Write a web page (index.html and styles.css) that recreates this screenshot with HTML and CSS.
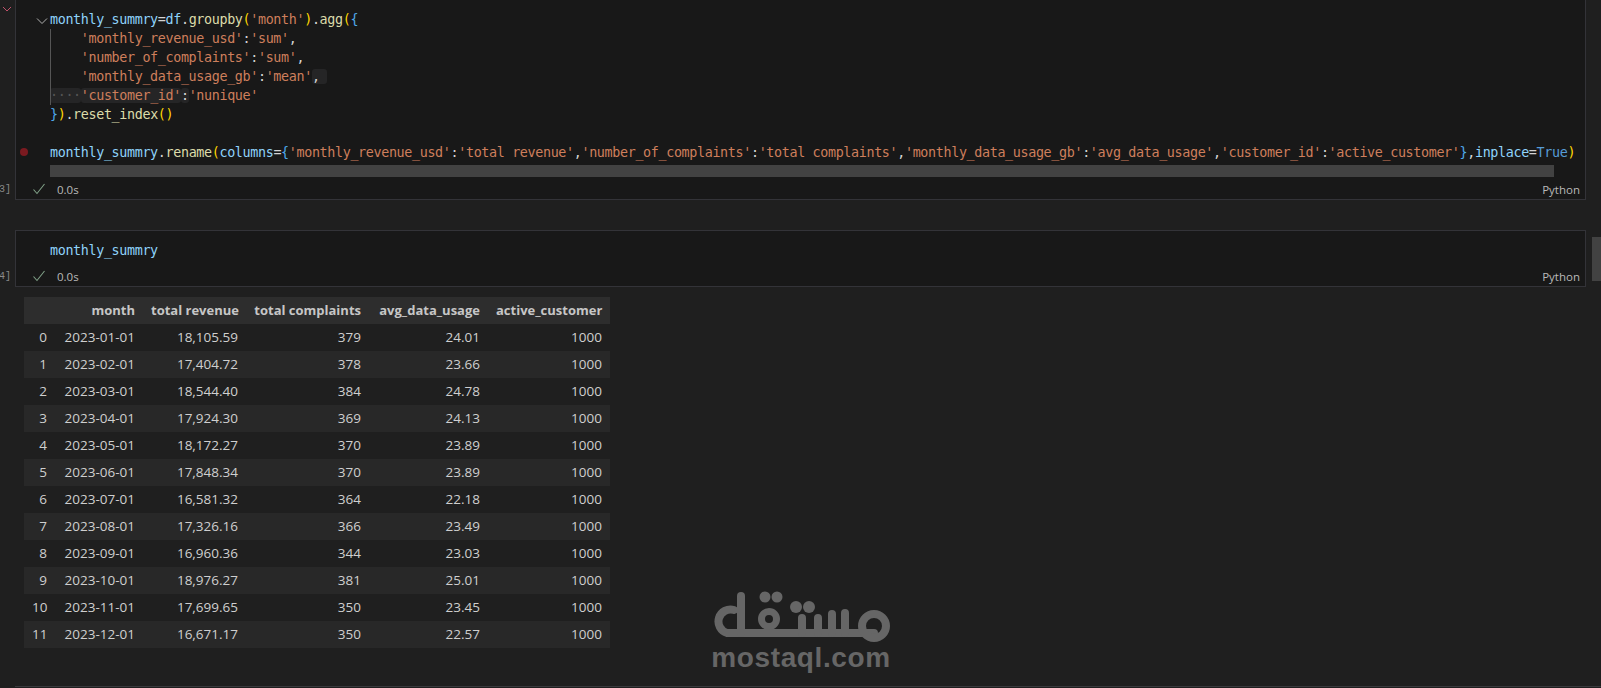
FILE: index.html
```html
<!DOCTYPE html>
<html lang="en">
<head>
<meta charset="utf-8">
<title>Notebook</title>
<link rel="stylesheet" href="styles.css">
</head>
<body>
<div class="notebook">
  <section class="row first-row">
    <div class="gutter">
      <svg class="collapse" width="10" height="6" viewBox="0 0 10 6"><path d="M1 1l4 4 4-4" fill="none" stroke="#c0506a" stroke-width="1"/></svg>
      <span class="exec">3]</span>
    </div>
    <div class="cell cell-top">
      <div class="code">
        <div class="line"><svg class="fold" width="12" height="8" viewBox="0 0 12 8"><path d="M1 1.500l5 5 5-5" fill="none" stroke="#b0b0b0" stroke-width="1"/></svg><span class="v">monthly_summry</span><span class="w">=</span><span class="v">df</span><span class="w">.</span><span class="f">groupby</span><span class="y">(</span><span class="s">'month'</span><span class="y">)</span><span class="w">.</span><span class="f">agg</span><span class="y">(</span><span class="b">{</span></div>
        <div class="line guide"><span class="ind"></span><span class="s">'monthly_revenue_usd'</span><span class="w">:</span><span class="s">'sum'</span><span class="w">,</span></div>
        <div class="line guide"><span class="ind"></span><span class="s">'number_of_complaints'</span><span class="w">:</span><span class="s">'sum'</span><span class="w">,</span></div>
        <div class="line guide"><span class="ind"></span><span class="s">'monthly_data_usage_gb'</span><span class="w">:</span><span class="s">'mean'</span><span class="w hl">, </span></div>
        <div class="line guide"><span class="hl dots">····</span><span class="s hl">'customer_id'</span><span class="w hl">:</span><span class="s">'nunique'</span></div>
        <div class="line"><span class="b">}</span><span class="y">)</span><span class="w">.</span><span class="f">reset_index</span><span class="y">()</span></div>
        <div class="line"></div>
        <div class="line"><span class="bp"></span><span class="v">monthly_summry</span><span class="w">.</span><span class="f">rename</span><span class="y">(</span><span class="v">columns</span><span class="w">=</span><span class="b">{</span><span class="s">'monthly_revenue_usd'</span><span class="w">:</span><span class="s">'total revenue'</span><span class="w">,</span><span class="s">'number_of_complaints'</span><span class="w">:</span><span class="s">'total complaints'</span><span class="w">,</span><span class="s">'monthly_data_usage_gb'</span><span class="w">:</span><span class="s">'avg_data_usage'</span><span class="w">,</span><span class="s">'customer_id'</span><span class="w">:</span><span class="s">'active_customer'</span><span class="b">}</span><span class="w">,</span><span class="v">inplace</span><span class="w">=</span><span class="k">True</span><span class="y">)</span></div>
      </div>
      <div class="hscroll"></div>
      <div class="status">
        <svg class="check" width="14" height="12" viewBox="0 0 14 12"><path d="M1.500 6.500l3.500 4L12.500 1" fill="none" stroke="#7f9f86" stroke-width="1.100"/></svg>
        <span class="time">0.0s</span>
        <span class="lang">Python</span>
      </div>
    </div>
  </section>
  <section class="row second-row">
    <div class="gutter">
      <span class="exec">4]</span>
    </div>
    <div class="cell">
      <div class="code code-short">
        <div class="line"><span class="v">monthly_summry</span></div>
      </div>
      <div class="status status-short">
        <svg class="check" width="14" height="12" viewBox="0 0 14 12"><path d="M1.500 6.500l3.500 4L12.500 1" fill="none" stroke="#7f9f86" stroke-width="1.100"/></svg>
        <span class="time">0.0s</span>
        <span class="lang">Python</span>
      </div>
    </div>
  </section>
  <table class="frame">
    <colgroup><col class="c-idx"><col class="c-month"><col class="c-rev"><col class="c-comp"><col class="c-avg"><col class="c-act"></colgroup>
    <thead>
      <tr><th></th><th>month</th><th>total revenue</th><th>total complaints</th><th>avg_data_usage</th><th>active_customer</th></tr>
    </thead>
    <tbody>
      <tr><th>0</th><td>2023-01-01</td><td>18,105.59</td><td>379</td><td>24.01</td><td>1000</td></tr>
      <tr><th>1</th><td>2023-02-01</td><td>17,404.72</td><td>378</td><td>23.66</td><td>1000</td></tr>
      <tr><th>2</th><td>2023-03-01</td><td>18,544.40</td><td>384</td><td>24.78</td><td>1000</td></tr>
      <tr><th>3</th><td>2023-04-01</td><td>17,924.30</td><td>369</td><td>24.13</td><td>1000</td></tr>
      <tr><th>4</th><td>2023-05-01</td><td>18,172.27</td><td>370</td><td>23.89</td><td>1000</td></tr>
      <tr><th>5</th><td>2023-06-01</td><td>17,848.34</td><td>370</td><td>23.89</td><td>1000</td></tr>
      <tr><th>6</th><td>2023-07-01</td><td>16,581.32</td><td>364</td><td>22.18</td><td>1000</td></tr>
      <tr><th>7</th><td>2023-08-01</td><td>17,326.16</td><td>366</td><td>23.49</td><td>1000</td></tr>
      <tr><th>8</th><td>2023-09-01</td><td>16,960.36</td><td>344</td><td>23.03</td><td>1000</td></tr>
      <tr><th>9</th><td>2023-10-01</td><td>18,976.27</td><td>381</td><td>25.01</td><td>1000</td></tr>
      <tr><th>10</th><td>2023-11-01</td><td>17,699.65</td><td>350</td><td>23.45</td><td>1000</td></tr>
      <tr><th>11</th><td>2023-12-01</td><td>16,671.17</td><td>350</td><td>22.57</td><td>1000</td></tr>
    </tbody>
  </table>
  <div class="next-cell"></div>
</div>
<div class="vscroll"></div>
<div class="watermark">
  <svg class="logo" width="190" height="54" viewBox="0 0 190 54" fill="none" stroke="#666" stroke-width="8" stroke-linecap="round">
    <path d="M28 20A12 12 0 1 0 21 43H168"/>
    <path d="M35 6V43"/>
    <circle cx="63" cy="29" r="7.500" stroke-width="7"/>
    <path d="M96 43V28M112 43V28M126 43V24M139 43V23"/>
    <circle cx="168" cy="36" r="12"/>
    <g fill="#666" stroke="none">
      <circle cx="59" cy="7" r="5.500"/><circle cx="71" cy="7" r="5.500"/>
      <circle cx="90" cy="17" r="6"/><circle cx="103" cy="17" r="6"/>
    </g>
  </svg>
  <div class="wordmark">mostaql.com</div>
</div>
</body>
</html>
```

FILE: styles.css
```css
* { box-sizing: border-box; }
html, body { margin: 0; height: 688px; overflow: hidden; }
body { background: #1f1f1f; color: #ccc; font-family: "Open Sans", "Noto Sans", sans-serif; position: relative; }
.notebook { display: flex; flex-direction: column; }
.row { display: flex; }
.second-row { margin-top: 30px; }
.gutter { width: 15px; flex: none; position: relative; }
.collapse { position: absolute; left: 2px; top: 6px; }
.exec { position: absolute; right: 4px; bottom: 4px; font-size: 10px; line-height: 12px; color: #8a8a8a; font-family: "Liberation Mono", monospace; }
.cell { width: 1571px; background: #181818; border: 1px solid #333338; height: 57px; }
.cell-top { border-top: 0; height: 200px; padding-top: 10px; }
.code { font-family: "DejaVu Sans Mono", monospace; font-size: 13.400px; letter-spacing: -0.360px; line-height: 19px; padding-left: 34px; }
.code-short { padding-top: 10px; }
.line { height: 19px; position: relative; white-space: pre; }
.guide::before { content: ""; position: absolute; left: 0; top: 0; width: 1px; height: 19px; background: #555; }
.ind { display: inline-block; width: 30.800px; }
.fold { position: absolute; left: -14px; top: 7px; }
.bp { position: absolute; left: -30px; top: 5px; width: 8px; height: 8px; border-radius: 50%; background: #7a1a20; }
.v { color: #8fd3fb; }
.w { color: #d4d4d4; }
.f { color: #dcdcaa; }
.y { color: #ffd700; }
.b { color: #4fa8ea; }
.s { color: #ce7f5c; }
.k { color: #569cd6; }
.hl { background: #252526; border-radius: 3px; }
.dots { color: #555; }
.hscroll { height: 12px; width: 1504px; margin: 3px 0 0 34px; background: #424242; }
.status { display: flex; align-items: center; height: 16px; margin-top: 4px; font-size: 11.500px; color: #b8b8b8; padding: 0 5px 0 16px; }
.status-short { margin-top: 8px; }
.check { flex: none; }
.time { margin-left: 11px; }
.lang { margin-left: auto; }
.frame { align-self: flex-start; table-layout: fixed; width: 586px; margin: 10px 0 0 24px; border-collapse: collapse; font-size: 13.500px; color: #cfcfcf; }
.c-idx { width: 31px; }
.c-month { width: 88px; }
.c-rev { width: 103px; }
.c-comp { width: 123px; }
.c-avg { width: 119px; }
.c-act { width: 122px; }
.frame th, .frame td { height: 27px; padding: 0 8px; text-align: right; font-weight: 400; line-height: 17px; white-space: nowrap; }
.frame thead th { background: #2d2d2d; font-size: 13px; font-weight: 700; color: #c6c6c6; }
.frame tbody tr:nth-child(even) { background: #282828; }
.next-cell { margin: 38px 0 0 15px; border-top: 1px solid #3a3a3d; }
.vscroll { position: absolute; left: 1592px; top: 237px; width: 9px; height: 44px; background: #424242; }
.watermark { position: absolute; left: 706px; top: 590px; width: 190px; display: flex; flex-direction: column; align-items: center; }
.wordmark { font-family: "Liberation Sans", sans-serif; font-weight: 700; font-size: 28px; line-height: 28px; color: #666; letter-spacing: 0.600px; }
```
